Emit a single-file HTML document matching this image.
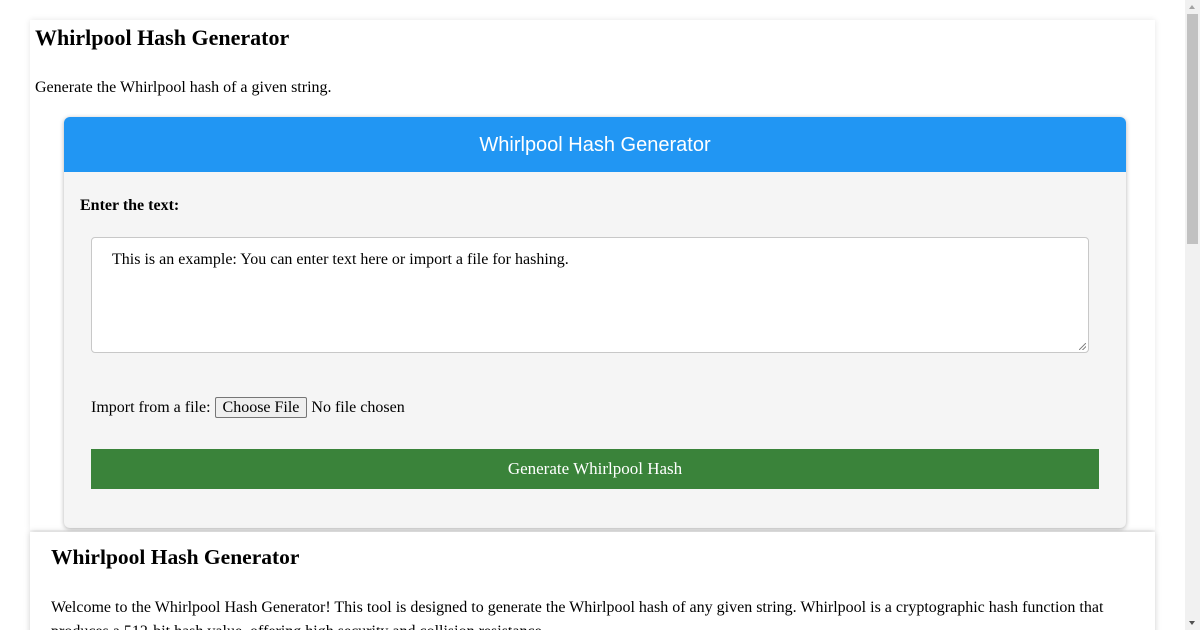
<!DOCTYPE html>
<html><head><style>
html,body{margin:0;padding:0;background:#fff;overflow:hidden;}
body{width:1200px;height:630px;position:relative;font-family:"Liberation Serif",serif;color:#000;}
.sb{position:absolute;right:0;top:0;width:15px;height:630px;background:#f1f1f1;}
.sb .th{position:absolute;left:2px;top:14px;width:11px;height:230px;background:#c1c1c1;}
.sb .up{position:absolute;left:4px;top:5px;border:3.5px solid transparent;border-bottom:4px solid #a3a3a3;border-top:none;}
.sb .dn{position:absolute;left:4px;bottom:5px;border:3.5px solid transparent;border-top:4px solid #505050;border-bottom:none;}
.box1{position:absolute;left:30px;top:20px;width:1125px;height:510px;background:#fff;box-shadow:0 0 6px rgba(0,0,0,.1);}
h1{position:absolute;left:35px;top:25px;margin:0;font-size:22px;font-weight:bold;}
.sub{position:absolute;left:35px;top:79px;font-size:16px;}
.card{position:absolute;left:64px;top:117px;width:1062px;height:411px;background:#f5f5f5;border-radius:6px;box-shadow:0 1px 5px rgba(0,0,0,.3);overflow:hidden;}
.hdr{height:55px;background:#2196f3;color:#fff;font-family:"Liberation Sans",sans-serif;font-size:20px;text-align:center;line-height:56px;}
.lbl{position:absolute;left:16px;top:80px;font-weight:bold;font-size:16px;}
.ta{position:absolute;left:27px;top:120px;width:996px;height:114px;background:#fff;border:1px solid #c8c8c8;border-radius:4px;}
.ta span{position:absolute;left:20px;top:13px;font-size:16px;}
.ta i{position:absolute;right:2px;bottom:2px;width:7px;height:7px;background:linear-gradient(135deg,transparent 45%,#888 45%,#888 55%,transparent 55%,transparent 70%,#888 70%,#888 80%,transparent 80%);}
.imp{position:absolute;left:27px;top:280px;font-size:16px;}
.btnf{display:inline-block;border:1px solid #767676;background:#efefef;border-radius:2px;padding:0 7px;font-size:16px;line-height:19px;}
.gen{position:absolute;left:27px;top:332px;width:1008px;height:40px;background:#3a833a;color:#fff;font-size:17px;text-align:center;line-height:40px;}
.box2{position:absolute;left:30px;top:532px;width:1125px;height:120px;background:#fff;box-shadow:0 0 6px rgba(0,0,0,.2);}
h2{position:absolute;left:51px;top:545px;margin:0;font-size:21.5px;font-weight:bold;}
.p{position:absolute;left:51px;top:596px;width:1080px;font-size:16px;line-height:24px;}
</style></head><body>
<div class="box1"></div>
<h1>Whirlpool Hash Generator</h1>
<div class="sub">Generate the Whirlpool hash of a given string.</div>
<div class="card">
<div class="hdr">Whirlpool Hash Generator</div>
<div class="lbl">Enter the text:</div>
<div class="ta"><span>This is an example: You can enter text here or import a file for hashing.</span><i></i></div>
<div class="imp">Import from a file: <span class="btnf">Choose File</span> No file chosen</div>
<div class="gen">Generate Whirlpool Hash</div>
</div>
<div class="box2"></div>
<h2>Whirlpool Hash Generator</h2>
<div class="p">Welcome to the Whirlpool Hash Generator! This tool is designed to generate the Whirlpool hash of any given string. Whirlpool is a cryptographic hash function that produces a 512-bit hash value, offering high security and collision resistance.</div>
<div class="sb"><div class="up"></div><div class="th"></div><div class="dn"></div></div>
</body></html>
